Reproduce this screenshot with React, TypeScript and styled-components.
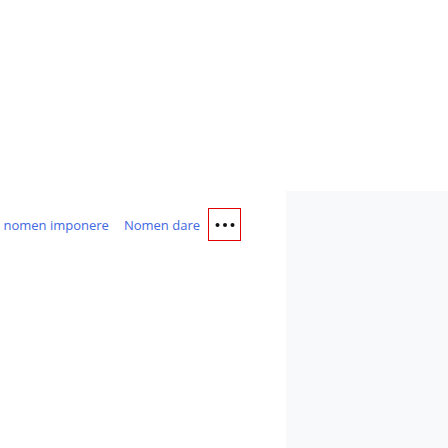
import React from "react";
import styled, { createGlobalStyle } from "styled-components";

const Global = createGlobalStyle`
  html, body { margin: 0; padding: 0; background: #ffffff; }
  body { font-family: "Open Sans", "Liberation Sans", Arial, sans-serif; }
`;

const Page = styled.div`
  width: 448px;
  height: 448px;
  display: grid;
  grid-template-columns: 286px 1fr;
  overflow: hidden;
`;

const Main = styled.div`
  padding-top: 208px;
  overflow: hidden;
`;

const Toolbar = styled.div`
  height: 33px;
  display: flex;
  align-items: center;
  justify-content: flex-end;
  padding-right: 45px;
  gap: 8px;
  overflow: hidden;
`;

const Links = styled.div`
  display: flex;
  align-items: center;
  gap: 15px;
  flex-shrink: 0;
`;

const Link = styled.a`
  font-family: "Open Sans", "Liberation Sans", Arial, sans-serif;
  font-size: 13px;
  line-height: 18px;
  color: #4169e1;
  text-decoration: none;
  white-space: nowrap;
  cursor: pointer;
`;

const MoreButton = styled.button`
  width: 33px;
  height: 33px;
  box-sizing: border-box;
  border: 1px solid #e00000;
  background: #ffffff;
  padding: 0;
  margin: 0;
  display: flex;
  align-items: center;
  justify-content: center;
  flex-shrink: 0;
`;

const Aside = styled.aside`
  margin-top: 191px;
  background: #f8f9fb;
  height: 257px;
`;

export default function App() {
  return (
    <>
      <Global />
      <Page>
        <Main>
          <Toolbar>
            <Links>
              <Link>Gruppi nomen imponere</Link>
              <Link>Nomen dare</Link>
            </Links>
            <MoreButton aria-label="Plura">
              <svg width="20" height="6" viewBox="0 0 20 6">
                <circle cx="2.5" cy="3" r="2" fill="#111" />
                <circle cx="10" cy="3" r="2" fill="#111" />
                <circle cx="17.5" cy="3" r="2" fill="#111" />
              </svg>
            </MoreButton>
          </Toolbar>
        </Main>
        <Aside />
      </Page>
    </>
  );
}
